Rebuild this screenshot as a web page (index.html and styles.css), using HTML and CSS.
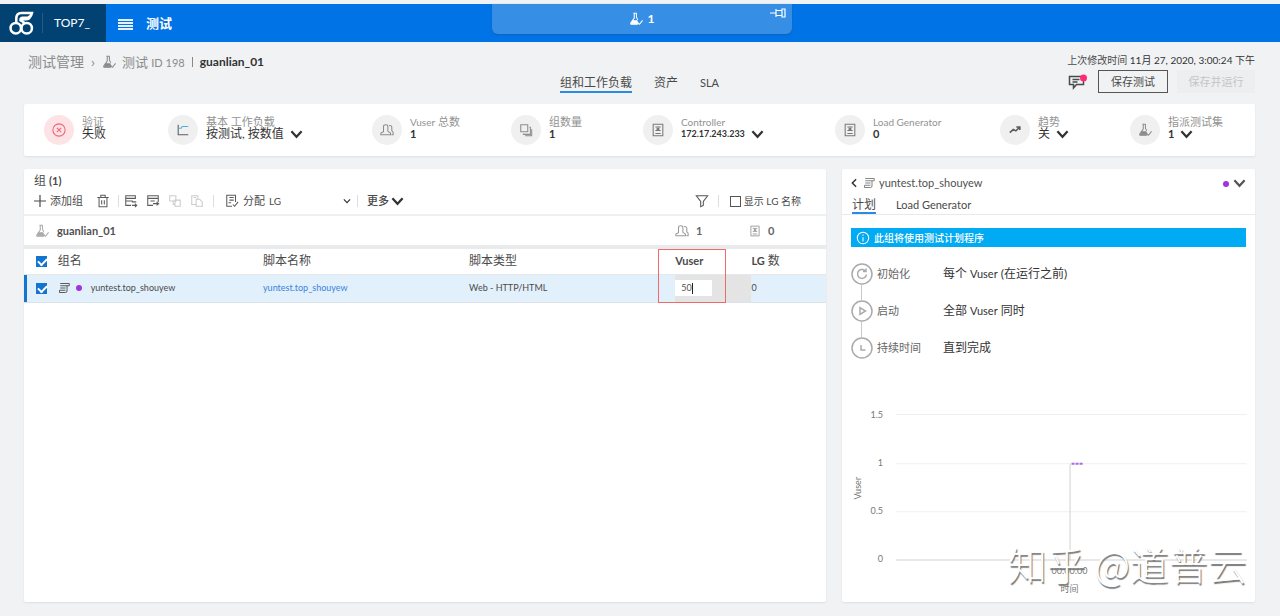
FILE: index.html
```html
<!DOCTYPE html>
<html lang="zh-CN">
<head>
<meta charset="utf-8">
<title>测试</title>
<link rel="stylesheet" href="styles.css">
</head>
<body>
<svg class="defs" aria-hidden="true">
  <symbol id="flask" viewBox="0 0 16 16"><path d="M5 1.500h4M6 2v5L2 12.500Q1.500 14 3 14h7M8.500 2v4l1.500 3" /><path d="M4 10h5l1.500 3.500H3z" fill="currentColor"/><path d="M10 12l2 2 3.500-4.500"/></symbol>
  <symbol id="users" viewBox="0 0 16 16"><path d="M1 13.500v-2l3-1.500V4q0-2 2.500-2T9 4v5.500l3 2v2zM10.500 3q3-.5 3 2v4l1.500 1.500v3h-2"/></symbol>
  <symbol id="copy" viewBox="0 0 16 16"><path d="M2 2h8v8H2zM12 5h1v8H5v-1M14.500 7v7.500H7"/></symbol>
  <symbol id="server" viewBox="0 0 16 16"><path d="M2.500 1.500h11v13h-11zM5 4.500h6M5 8.500h6M5 12h6"/><path d="M7 6h2v1.500H7z" fill="currentColor"/></symbol>
  <symbol id="down" viewBox="0 0 14 10"><path d="M1.500 2L7 8l5.500-6"/></symbol>
  <symbol id="script" viewBox="0 0 16 16"><path d="M3 2h12v3h-3M12 5v7q0 2-2 2H2v-3h8M3 8h7M3 5h9"/></symbol>
  <symbol id="trash" viewBox="0 0 16 16"><path d="M1.500 4h13M5.500 4V1.500h5V4M3.500 4v10.500h9V4M6.500 7v5M9.500 7v5"/></symbol>
</svg>

<header class="topbar">
  <div class="brand">
    <svg class="logo" viewBox="0 0 24 24"><circle cx="6.500" cy="16.500" r="5"/><circle cx="17" cy="16.500" r="5"/><path d="M7 11V7.500Q7 2 12 2h10q-1 4-4 4.500h-5q-2 0-2 2.500l5 3M10 8h6q4 0 4-3"/></svg>
    <span class="tenant">TOP7_</span>
  </div>
  <button class="menu" aria-label="菜单"><i></i><i></i><i></i><i></i></button>
  <h1 class="app">测试</h1>
  <div class="notch">
    <svg class="ic14"><use href="#flask"/></svg><b>1</b>
    <svg class="pin" viewBox="0 0 16 10"><path d="M0 5h6M6 1v8M6 2.500h6v5H6M12 1h3v8h-3z"/></svg>
  </div>
</header>

<main class="page">
  <section class="heading">
    <nav class="crumbs">
      <a href="#">测试管理</a><span class="sep">›</span>
      <svg class="ic14"><use href="#flask"/></svg>
      <a class="test" href="#">测试 <span class="id">ID 198</span></a><span class="bar"></span><b>guanlian_01</b>
    </nav>
    <nav class="tabs">
      <a class="on" href="#">组和工作负载</a><a href="#">资产</a><a class="small" href="#">SLA</a>
    </nav>
    <div class="actions">
      <p>上次修改时间 <span>11月 27, 2020, 3:00:24 下午</span></p>
      <div class="buttons">
        <svg class="comment" viewBox="0 0 20 16"><path d="M1.500 2.500h14v8h-7l-3 3.500v-3.500h-4zM4.500 5.500h7M4.500 8h5"/><circle cx="15.500" cy="4" r="3.500"/></svg>
        <button class="save">保存测试</button>
        <button class="run" disabled>保存并运行</button>
      </div>
    </div>
  </section>

  <section class="summary">
    <div class="stat"><span class="disc bad"><svg class="ic14" viewBox="0 0 16 16"><circle cx="8" cy="8" r="7"/><path d="M5.500 5.500l5 5M10.500 5.500l-5 5"/></svg></span><div><p>验证</p><strong>失败</strong></div></div>
    <div class="stat"><span class="disc"><svg class="ic14 dark" viewBox="0 0 16 16"><path d="M2.500 2v11.500H14"/><path class="cyan" d="M3 6h3l1-2h7"/></svg></span><div><p>基本 工作负载</p><strong>按测试, 按数值 <svg class="chev"><use href="#down"/></svg></strong></div></div>
    <div class="stat"><span class="disc"><svg class="ic14"><use href="#users"/></svg></span><div><p><small>Vuser</small> 总数</p><strong class="num">1</strong></div></div>
    <div class="stat"><span class="disc"><svg class="ic14"><use href="#copy"/></svg></span><div><p>组数量</p><strong class="num">1</strong></div></div>
    <div class="stat"><span class="disc"><svg class="ic14 mid"><use href="#server"/></svg></span><div><p><small>Controller</small></p><strong class="num ip">172.17.243.233 <svg class="chev"><use href="#down"/></svg></strong></div></div>
    <div class="stat"><span class="disc"><svg class="ic14 mid"><use href="#server"/></svg></span><div><p><small>Load Generator</small></p><strong class="num">0</strong></div></div>
    <div class="stat"><span class="disc"><svg class="ic14 dark" viewBox="0 0 16 16"><path class="trend" d="M2 11l4-3.500 3 1.500 4-4M9.500 4.500h4V8"/></svg></span><div><p>趋势</p><strong>关 <svg class="chev"><use href="#down"/></svg></strong></div></div>
    <div class="stat"><span class="disc"><svg class="ic14"><use href="#flask"/></svg></span><div><p>指派测试集</p><strong class="num">1 <svg class="chev wide"><use href="#down"/></svg></strong></div></div>
  </section>

  <div class="columns">
    <section class="panel groups">
      <h2>组 <b>(1)</b></h2>
      <div class="toolbar">
        <button class="add"><svg class="ic12" viewBox="0 0 12 12"><path d="M6 0v12M0 6h12"/></svg>添加组</button>
        <button class="tool" aria-label="删除"><svg class="ic14 dark"><use href="#trash"/></svg></button>
        <span class="rule near"></span>
        <button class="tool" aria-label="添加脚本"><svg class="ic14 dark" viewBox="0 0 16 16"><path d="M2 2h11v3H2zM2 5v3h8M2 8v5h6M9 9h5M9 13h6M12.500 11l2 2-2 2"/></svg></button>
        <button class="tool" aria-label="替换脚本"><svg class="ic14 dark" viewBox="0 0 16 16"><path d="M8 13H2V2h12v7M2 5h12M5 8h5M8 11h6M12 9l2.500 2-2.500 2"/></svg></button>
        <button class="tool" aria-label="复制" disabled><svg class="ic14" viewBox="0 0 16 16"><path d="M2 2h7v6H2zM6 8v4h2M8 7h6v7H8z"/></svg></button>
        <button class="tool" aria-label="粘贴" disabled><svg class="ic14" viewBox="0 0 16 16"><path d="M7 12H2V2h7v4M7 6h4l3 3v5H7zM4 4h3"/></svg></button>
        <span class="rule"></span>
        <button class="assign"><svg class="ic14 dark" viewBox="0 0 16 16"><path d="M8 14H2V1.500h10V9M5 4h5M5 7h5M4 10h3M9 12l2 2 4-5"/></svg>分配 <small>LG</small> <svg class="chev thin"><use href="#down"/></svg></button>
        <span class="rule"></span>
        <button class="more">更多<svg class="chev"><use href="#down"/></svg></button>
        <button class="tool filter" aria-label="筛选"><svg class="ic14" viewBox="0 0 16 16"><path d="M1.500 2h13l-5 6.500v4.500l-3 1.500v-6z"/></svg></button>
        <span class="rule"></span>
        <label class="show"><input type="checkbox" class="box">显示 LG 名称</label>
      </div>
      <div class="testrow">
        <svg class="ic14"><use href="#flask"/></svg><b>guanlian_01</b>
        <span class="count first"><svg class="ic14"><use href="#users"/></svg><em>1</em></span>
        <span class="count"><svg class="ic12"><use href="#server"/></svg><em>0</em></span>
      </div>
      <table class="grid">
        <colgroup><col class="c1"><col class="c2"><col class="c3"><col class="c4"><col class="c5"><col class="c6"></colgroup>
        <thead><tr>
          <th><input type="checkbox" class="box" checked aria-label="全选"></th><th>组名</th><th>脚本名称</th><th>脚本类型</th><th class="marked"><b>Vuser</b><span class="mark"></span></th><th><b>LG</b> 数</th>
        </tr></thead>
        <tbody><tr>
          <td><input type="checkbox" class="box" checked aria-label="选择 yuntest.top_shouyew"></td>
          <td><div class="name"><svg class="ic12"><use href="#script"/></svg><span class="dot"></span>yuntest.top_shouyew</div></td>
          <td><a href="#">yuntest.top_shouyew</a></td>
          <td>Web - HTTP/HTML</td>
          <td class="edit"><span class="field"><input type="text" value="50" size="2" aria-label="Vuser"><i></i></span></td>
          <td>0</td>
        </tr></tbody>
      </table>
    </section>

    <section class="panel detail">
      <div class="title">
        <button class="tool" aria-label="返回"><svg class="back" viewBox="0 0 8 12"><path d="M6.500 1.500L2 6l4.500 4.500"/></svg></button>
        <svg class="ic12"><use href="#script"/></svg><span>yuntest.top_shouyew</span>
        <i class="dot"></i><button class="tool" aria-label="展开"><svg class="chev soft"><use href="#down"/></svg></button>
      </div>
      <nav class="subtabs"><a class="on" href="#">计划</a><a class="lg" href="#">Load Generator</a></nav>
      <p class="info"><svg class="ic14" viewBox="0 0 16 16"><circle cx="8" cy="8" r="6.500"/><path d="M8 7v5M8 4v1.500"/></svg>此组将使用测试计划程序</p>
      <ol class="steps">
        <li><svg class="step" viewBox="0 0 22 22"><circle cx="11" cy="11" r="10"/><path d="M14 7.500a4.500 4.500 0 1 0 1.500 4M15 5.500v3h-3"/></svg><span>初始化</span><b>每个 <small>Vuser</small> (在运行之前)</b></li>
        <li><svg class="step" viewBox="0 0 22 22"><circle cx="11" cy="11" r="10"/><path d="M9 7.500v7l5.500-3.500z"/></svg><span>启动</span><b>全部 <small>Vuser</small> 同时</b></li>
        <li><svg class="step" viewBox="0 0 22 22"><circle cx="11" cy="11" r="10"/><path d="M10 8v5h4.500"/></svg><span>持续时间</span><b>直到完成</b></li>
      </ol>
      <svg class="chart" viewBox="0 0 412 210">
        <path class="line" d="M54 23.500h350M54 72.500h350M54 120.500h350"/><path class="axis" d="M54 168.500h350M227.500 73v96"/>
        <path class="data" d="M229 72.500h11"/>
        <g class="ticks"><text x="41" y="27">1.5</text><text x="41" y="75">1</text><text x="41" y="123">0.5</text><text x="41" y="171">0</text></g>
        <g class="names"><text x="227" y="183">00:00:00</text><text x="227" y="201">时间</text><text transform="translate(19 97) rotate(-90)">Vuser</text></g>
      </svg>
      <div class="watermark">知乎 @道普云</div>
    </section>
  </div>
</main>
</body>
</html>
```
FILE: styles.css
```css
* { box-sizing: border-box; }
body {
  margin: 0;
  padding-top: 4px;
  min-height: 100vh;
  background: #f0f2f4;
  color: #4a4a4a;
  font: 11px/14px Lato, "Noto Sans CJK SC", sans-serif;
}
h1, h2, p, ol { margin: 0; padding: 0; font-weight: 400; }
a { color: inherit; text-decoration: none; }
button { border: 0; padding: 0; background: none; color: inherit; font: inherit; }
small { font-size: 10px; }
svg { fill: none; stroke: currentColor; stroke-width: 1.2; flex: none; }
svg text { stroke: none; }
.defs { position: absolute; width: 0; height: 0; }
.ic14 { width: 14px; height: 14px; }
.ic12 { width: 12px; height: 12px; }
.dark { color: #5c5c5c; }
.mid { color: #777; }
.chev { width: 13px; height: 10px; stroke-width: 2.4; color: #333; }
.chev.wide { margin-left: 4px; }
.chev.soft { color: #555; }
.chev.thin { width: 8px; height: 6px; stroke-width: 2; margin-left: auto; }
.dot { width: 6px; height: 6px; border-radius: 50%; background: #a033e0; }

.topbar { position: relative; display: flex; align-items: center; height: 38px; background: #0073e7; color: #fff; }
.brand { display: flex; align-items: center; align-self: stretch; width: 106px; padding-left: 9px; background: #014272; }
.logo { width: 25px; height: 25px; stroke-width: 2.4; }
.tenant { margin-left: 8px; padding-left: 11px; border-left: 1px solid #26598a; font-size: 12px; line-height: 20px; }
.menu { display: grid; gap: 1px; width: 15px; margin: 2px 12px 0; }
.menu i { height: 2px; background: #fff; opacity: .9; }
.app { margin-left: 1px; font-size: 13px; font-weight: 700; }
.notch { position: absolute; top: 0; left: 38.4%; width: 23.5%; height: 30px; display: flex; align-items: center; justify-content: center; gap: 4px; border-radius: 0 0 6px 6px; background: #368fe5; font-size: 12px; box-shadow: 0 1px 2px #1262b5; }
.pin { position: absolute; top: 4px; right: 6px; width: 16px; height: 10px; }

.page { padding: 0 25px 14px 24px; }
.heading { display: grid; grid-template-columns: 1fr auto 1fr; height: 62px; }
.crumbs { display: flex; align-items: center; height: 40px; padding-left: 4px; font-size: 14px; color: #8b8b8b; white-space: nowrap; }
.crumbs .sep { margin: 0 7px; }
.crumbs .ic14 { margin-right: 6px; }
.crumbs .test { font-size: 13px; }
.crumbs .id { font-size: 11px; }
.crumbs .bar { width: 1px; height: 10px; margin: 0 7px; background: #888; }
.crumbs b { font-size: 12px; color: #333; }
.tabs { display: flex; gap: 22px; align-self: start; padding-top: 33px; font-size: 12px; line-height: 16px; }
.tabs .on { border-bottom: 2px solid #2b8be0; }
.tabs .small { font-size: 11px; }
.actions { display: flex; flex-direction: column; align-items: flex-end; gap: 3px; padding-top: 11px; }
.actions p { font-size: 10px; white-space: nowrap; }
.actions p span { color: #333; }
.buttons { display: flex; align-items: center; }
.buttons button { height: 23px; font-size: 11px; }
.comment { width: 20px; height: 16px; margin-right: 10px; stroke-width: 1.5; }
.comment circle { fill: #ff2b78; stroke: none; }
.save { width: 70px; border: 1px solid #555; }
.buttons .run { width: 78px; margin-left: 9px; background: #edeeef; color: #c4c5c6; }

.summary { display: grid; grid-template-columns: 124fr 204fr 139fr 132fr 192fr 165fr 130fr 125fr; height: 52px; padding-left: 20px; background: #fff; border-radius: 2px; box-shadow: 0 1px 2px #dde0e3; }
.stat { display: flex; align-items: center; gap: 8px; min-width: 0; white-space: nowrap; }
.stat p { font-size: 11px; line-height: 12px; color: #929292; }
.stat strong { display: flex; align-items: center; gap: 4px; font-size: 12px; line-height: 12px; font-weight: 400; color: #333; }
.stat .chev { margin-left: 2px; }
.stat .num { font-size: 11px; font-weight: 700; }
.stat .ip { font-size: 9px; }
.stat > div { padding-bottom: 5px; }
.disc { display: grid; place-items: center; width: 30px; height: 30px; border-radius: 50%; background: #f0f0f0; color: #8c8c8c; }
.disc.bad { background: #fde2e6; color: #ee6478; }
.cyan { stroke: #4ab0d9; }
.trend { stroke-width: 1.8; }

.columns { display: grid; grid-template-columns: 802fr 413fr; gap: 16px; margin-top: 13px; }
.panel { min-height: 432px; background: #fff; border-radius: 2px; box-shadow: 0 1px 2px #dde0e3; }
.groups h2 { padding: 5px 10px 0; font-size: 12px; }
.groups h2 b { font-size: 11px; }
.toolbar { display: flex; align-items: center; height: 28px; padding: 0 25px 0 10px; border-bottom: 2px solid #eeeff0; white-space: nowrap; }
.tool { display: flex; }
.tool + .tool { margin-left: 8px; }
.tool:disabled { color: #ccc; }
.add { display: flex; align-items: center; gap: 4px; margin-right: 13px; }
.rule { width: 1px; height: 12px; margin: 0 6px 0 8px; background: #dedede; }
.tool + .rule { margin: 0 11px 0 9px; }
.tool + .rule.near { margin: 0 5px 0 8px; }
.assign { display: flex; align-items: center; gap: 4px; width: 126px; }
.assign + .rule { margin: 0 9px 0 6px; }
.more { display: flex; align-items: center; gap: 2px; font-weight: 500; }
.tool.filter { margin-left: auto; color: #555; }
.show { display: flex; align-items: center; gap: 3px; font-size: 10px; }
.box { appearance: none; width: 11px; height: 11px; margin: 0; border: 1px solid #555; background: #fff; }
.box:checked { border: 0; background: #1475d1; }
.box:checked::after { content: ""; display: block; width: 7px; height: 4px; margin: 2px; border: solid #fff; border-width: 0 0 2px 2px; transform: rotate(-45deg); }
.testrow { display: flex; align-items: center; height: 29px; padding-left: 11px; color: #aaa; }
.testrow b { margin-left: 8px; color: #505050; }
.count { display: flex; align-items: center; gap: 7px; width: 77px; color: #999; }
.count em { font-style: normal; font-weight: 700; color: #666; }
.count.first { margin-left: auto; width: 74px; }
.grid { width: 100%; table-layout: fixed; border-collapse: collapse; border-top: 4px solid #eaebec; font-size: 9px; }
.c1 { width: 4.2%; } .c2 { width: 25.6%; } .c3 { width: 25.7%; } .c4 { width: 25.7%; } .c5 { width: 9.5%; } .c6 { width: 9.3%; }
.grid th, .grid td { padding: 0; text-align: left; }
.grid th { height: 27px; font-size: 12px; font-weight: 400; border-bottom: 1px solid #e5e7e9; }
.grid th b { font-size: 11px; }
.grid th .box, .grid td .box { display: block; margin-left: 12px; }
.grid td { height: 28px; background: #e2f0fc; border-bottom: 1px solid #dce3e8; }
.grid td:first-child { box-shadow: inset 3px 0 #1475d1; }
.grid a { color: #3b82dc; }
.name { display: flex; align-items: center; }
.name .dot { margin: 0 9px 0 6px; }
.marked { position: relative; }
.mark { position: absolute; top: 0; left: -17px; width: 68px; height: 54px; border: 1px solid #f06a6a; }
.grid .edit { background: #e4e4e4; }
.field { display: flex; align-items: center; width: 37px; height: 16px; padding-left: 6px; background: #fff; }
.field input { width: 11px; padding: 0; border: 0; outline: 0; background: none; color: #555; font: inherit; }
.field i { width: 1px; height: 11px; background: #222; }

.detail { position: relative; }
.title { display: flex; align-items: center; height: 27px; padding: 0 9px 0 8px; color: #777; }
.title span { margin-left: 4px; color: #505050; }
.title .dot { margin: 3px 4px 0 auto; }
.back { width: 8px; height: 10px; margin-right: 5px; color: #333; stroke-width: 1.8; }
.subtabs { display: flex; gap: 20px; height: 19px; padding: 0 10px; border-bottom: 1px solid #e8e9ea; line-height: 17px; }
.subtabs .on { border-bottom: 2px solid #2b8be0; font-size: 12px; }
.info { display: flex; align-items: center; gap: 4px; height: 19px; margin: 13px 9px 0; padding-left: 5px; background: #00abf3; color: #fff; font-size: 10px; font-weight: 500; }
.steps { display: grid; gap: 15px; margin: 16px 9px 0; list-style: none; }
.steps li { position: relative; display: grid; grid-template-columns: 21px 61px 1fr; gap: 5px; align-items: center; height: 22px; color: #666; }
.steps li + li::before { content: ""; position: absolute; left: 10px; top: -15px; height: 15px; border-left: 1px solid #c9c9c9; }
.steps b { font-size: 12px; font-weight: 400; color: #333; }
.steps small { font-size: 11px; }
.step { width: 22px; height: 22px; color: #aaa; stroke-width: 1.5; }
.chart { display: block; width: 100%; margin-top: 32px; stroke-width: 1; }
.chart .line { stroke: #efefef; }
.chart .axis { stroke: #d2d2d2; }
.chart .data { stroke: #a66ae8; stroke-width: 2; stroke-dasharray: 3 1; }
.chart text { fill: #777; font-size: 9px; }
.ticks { text-anchor: end; }
.names { text-anchor: middle; }
.watermark { position: absolute; right: 8px; bottom: 15px; color: #fff; font-family: "Noto Sans CJK SC", sans-serif; font-size: 39px; font-weight: 300; line-height: 48px; white-space: nowrap; text-shadow: 1px 2px 1px #777; }
```
